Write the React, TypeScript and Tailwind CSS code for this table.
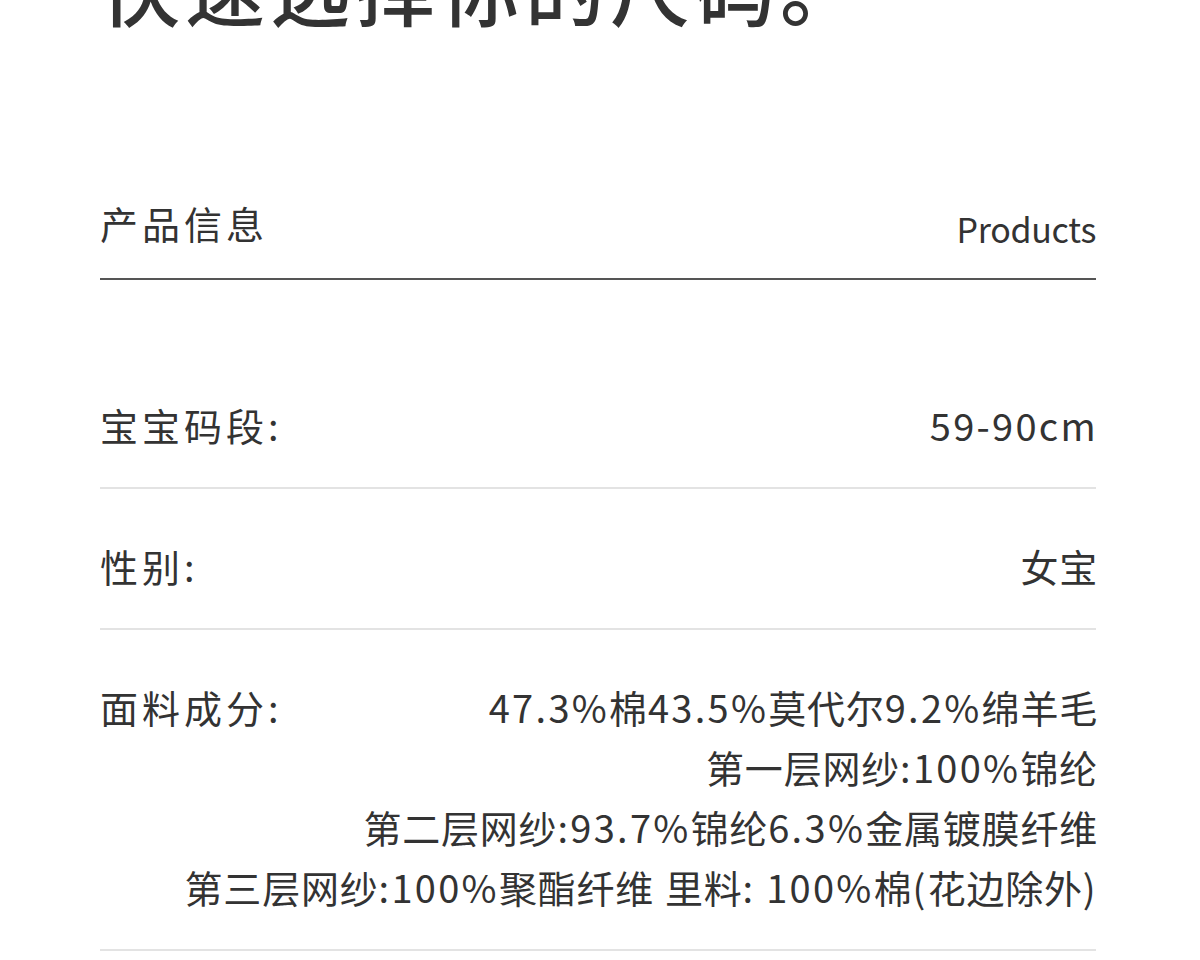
import React from "react";

const font = { fontFamily: '"Noto Sans CJK SC", "Noto Sans", sans-serif' };

function Mixed({ text }: { text: string }) {
  const parts = text.match(/[\u3000-\u9fff\uff00-\uffef]+|[^\u3000-\u9fff\uff00-\uffef]+/g) || [];
  return (
    <>
      {parts.map((p, i) =>
        /[\u3000-\u9fff\uff00-\uffef]/.test(p) ? (
          <span key={i} className="tracking-[0.8px]">{p}</span>
        ) : (
          <span key={i} className="tracking-[2.3px]">{p}</span>
        )
      )}
    </>
  );
}

function Row({ label, values }: { label: string; values: string[] }) {
  return (
    <div className="flow-root border-b-2 border-[#e3e3e3] pt-[47px] pb-[32px]">
      <div className="float-left text-[38px] leading-[60px] tracking-[4px] text-[#333333] whitespace-nowrap">{label}</div>
      <div className="-mr-[2px] text-right">
        {values.map((v, i) => (
          <div key={i} className="text-[38px] leading-[60px] text-[#333333] whitespace-nowrap">
            <Mixed text={v} />
          </div>
        ))}
      </div>
    </div>
  );
}

export default function App() {
  return (
    <div className="w-[1200px] h-[960px] overflow-hidden bg-white" style={font}>
      <div className="pl-[100px] pr-[104px]">
        <div className="mt-[-55px] text-[80px] leading-[80px] tracking-[5px] font-medium text-[#333333] whitespace-nowrap">
          快速选择你的尺码。
        </div>
        <div className="mt-[168px] flex items-start justify-between border-b-2 border-[#555555] pb-[19px]">
          <div className="text-[38px] leading-[60px] tracking-[4px] text-[#333333]">产品信息</div>
          <div className="mt-[6px] text-[34px] leading-[60px] tracking-[-0.3px] text-[#333333]">Products</div>
        </div>
        <div className="mt-[68px]">
          <Row label="宝宝码段:" values={["59-90cm"]} />
          <Row label="性别:" values={["女宝"]} />
          <Row
            label="面料成分:"
            values={[
              "47.3%棉43.5%莫代尔9.2%绵羊毛",
              "第一层网纱:100%锦纶",
              "第二层网纱:93.7%锦纶6.3%金属镀膜纤维",
              "第三层网纱:100%聚酯纤维 里料: 100%棉(花边除外)",
            ]}
          />
        </div>
      </div>
    </div>
  );
}
